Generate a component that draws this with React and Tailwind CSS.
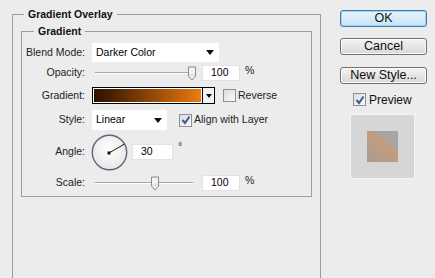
import React from "react";

const font = { fontFamily: '"Liberation Sans", Arial, sans-serif' };

function Arrow() {
  return (
    <svg width="8" height="5" viewBox="0 0 8 5">
      <path d="M0 0 H8 L4 5 Z" fill="#111" />
    </svg>
  );
}

function Checkbox({ checked }) {
  return (
    <div className="w-[13px] h-[13px] border border-[#8e8f8f] bg-gradient-to-br from-[#dcdcdc] to-[#fbfbfb] flex items-center justify-center shrink-0">
      {checked && (
        <svg width="10" height="10" viewBox="0 0 10 10">
          <path d="M1.5 5 L4 8 L8.5 1.5" stroke="#3b5a96" strokeWidth="2" fill="none" />
        </svg>
      )}
    </div>
  );
}

function Slider({ thumb }) {
  return (
    <div className="relative w-[98px] h-[16px] ml-[4px] flex items-center">
      <div className="w-full h-[2px] border-t border-[#a5a5a5] border-b border-b-white" />
      {/* thumb sits over the groove */}
      <svg
        className="absolute top-[1px]"
        style={{ left: thumb - 5 }}
        width="10"
        height="15"
        viewBox="0 0 10 15"
      >
        <path
          d="M1.5 1 H8.5 V10 L5 14 L1.5 10 Z"
          fill="#f2f2f2"
          stroke="#8a8a8a"
        />
        <path d="M2.5 9 H7.5" stroke="#cfcfcf" />
      </svg>
    </div>
  );
}

function Field({ value, w }) {
  return (
    <div
      className="h-[16px] bg-white border border-[#e2e2e2] flex items-center pl-[8px] text-[10.5px] text-black"
      style={{ width: w }}
    >
      {value}
    </div>
  );
}

function Label({ children }) {
  return (
    <div className="w-[64px] text-right pr-[1px] text-[10.5px] text-[#222] shrink-0">
      {children}
    </div>
  );
}

function Button({ children, primary }) {
  return (
    <div
      className={`h-[17px] w-[87px] rounded-[3px] flex items-center justify-center text-[12.5px] text-[#111] bg-gradient-to-b ${
        primary
          ? "border border-[#3d7bad] from-[#e9f4fb] to-[#c7e3f4] shadow-[inset_0_0_0_1px_#9fd3f3]"
          : "border border-[#707070] from-[#f4f4f4] to-[#d8d8d8] shadow-[inset_0_0_0_1px_#fbfbfb]"
      }`}
    >
      {children}
    </div>
  );
}

// title sits on the top border of its group box
function GroupTitle({ children, indent }) {
  return (
    <div
      className={`-mt-[7px] w-fit px-[4px] bg-[#ececec] text-[10.5px] font-bold leading-[13px] text-[#111] ${indent}`}
    >
      {children}
    </div>
  );
}

export default function App() {
  return (
    <div
      className="w-[435px] h-[278px] overflow-hidden bg-[#ececec] flex"
      style={font}
    >
      {/* left: settings group */}
      <div className="ml-[12px] mt-[14px] w-[309px] h-[300px] border border-[#9c9c9c] px-[8px] shrink-0 flex flex-col">
        <GroupTitle indent="ml-[3px]">Gradient Overlay</GroupTitle>

        <div className="mt-[10px] border border-[#9c9c9c] pb-[5px] flex flex-col">
          <GroupTitle indent="ml-[12px]">Gradient</GroupTitle>

          {/* Blend mode */}
          <div className="flex items-center h-[21px] mt-[4px]">
            <Label>Blend Mode:</Label>
            <div className="ml-[5px] w-[129px] h-[21px] bg-white border border-[#ececec] flex items-center justify-between pl-[4px] pr-[5px] text-[10.5px] text-black">
              <span>Darker Color</span>
              <Arrow />
            </div>
          </div>

          {/* Opacity */}
          <div className="flex items-center h-[16px] mt-[2px]">
            <Label>Opacity:</Label>
            <div className="ml-[5px] flex items-center">
              <Slider thumb={97} />
              <div className="ml-[9px]">
                <Field value="100" w={38} />
              </div>
              <span className="ml-[5px] text-[10.5px] text-[#222] -mt-[4px]">%</span>
            </div>
          </div>

          {/* Gradient */}
          <div className="flex items-center h-[17px] mt-[6px]">
            <Label>Gradient:</Label>
            <div className="ml-[6px] flex h-[17px] border border-black">
              <div className="w-[109px] h-full border border-white bg-gradient-to-r from-[#2c1100] via-[#8a4306] to-[#ec7c0e]" />
              <div className="w-[12px] h-full bg-[#f2f2f2] border-l border-black flex items-center justify-center">
                <svg width="6" height="4" viewBox="0 0 6 4">
                  <path d="M0 0 H6 L3 4 Z" fill="#111" />
                </svg>
              </div>
            </div>
            <div className="ml-[8px] flex items-center gap-[2px]">
              <Checkbox />
              <span className="text-[10.5px] text-[#222]">Reverse</span>
            </div>
          </div>

          {/* Style */}
          <div className="flex items-center h-[22px] mt-[5px]">
            <Label>Style:</Label>
            <div className="ml-[5px] w-[77px] h-[22px] bg-white border border-[#ececec] flex items-center justify-between pl-[4px] pr-[5px] text-[10.5px] text-black">
              <span>Linear</span>
              <Arrow />
            </div>
            <div className="ml-[11px] flex items-center gap-[2px]">
              <Checkbox checked />
              <span className="text-[10.5px] text-[#222]">Align with Layer</span>
            </div>
          </div>

          {/* Angle */}
          <div className="flex items-center h-[36px] mt-[3px]">
            <Label>Angle:</Label>
            <div className="ml-[5px] flex items-center">
              <svg width="37" height="37" viewBox="0 0 37 37">
                <defs>
                  <radialGradient id="dial" cx="50%" cy="40%" r="60%">
                    <stop offset="0%" stopColor="#ffffff" />
                    <stop offset="100%" stopColor="#e6e6e6" />
                  </radialGradient>
                </defs>
                <circle cx="18.5" cy="18.5" r="17.2" fill="url(#dial)" stroke="#5b6678" strokeWidth="1.4" />
                <line x1="18" y1="19" x2="33" y2="10.3" stroke="#111" strokeWidth="1" />
                <rect x="16.5" y="17.5" width="3" height="3" fill="#111" />
              </svg>
              <div className="ml-[4px]">
                <Field value="30" w={41} />
              </div>
              <span className="ml-[5px] text-[10.5px] text-[#222] -mt-[10px]">°</span>
            </div>
          </div>

          {/* Scale */}
          <div className="flex items-center h-[16px] mt-[5px]">
            <Label>Scale:</Label>
            <div className="ml-[5px] flex items-center">
              <Slider thumb={60} />
              <div className="ml-[9px]">
                <Field value="100" w={38} />
              </div>
              <span className="ml-[5px] text-[10.5px] text-[#222] -mt-[4px]">%</span>
            </div>
          </div>
        </div>
      </div>

      {/* right: buttons and preview */}
      <div className="ml-[19px] pt-[10px] flex flex-col w-[87px]">
        <Button primary>OK</Button>
        <div className="mt-[11px]">
          <Button>Cancel</Button>
        </div>
        <div className="mt-[12px]">
          <Button>New Style...</Button>
        </div>
        <div className="mt-[9px] ml-[13px] flex items-center gap-[3px] h-[13px]">
          <Checkbox checked />
          <span className="text-[12px] text-[#111]">Preview</span>
        </div>
        <div className="mt-[8px] ml-[10px] w-[65px] h-[65px] bg-[#d6d6d6] border border-[#f4f4f4] flex items-center justify-center">
          <div className="w-[31px] h-[31px] bg-[linear-gradient(220deg,#a6a5a8_0%,#a8a4a4_28%,#c49c7c_45%,#b79c86_70%,#a99a92_100%)]" />
        </div>
      </div>
    </div>
  );
}
